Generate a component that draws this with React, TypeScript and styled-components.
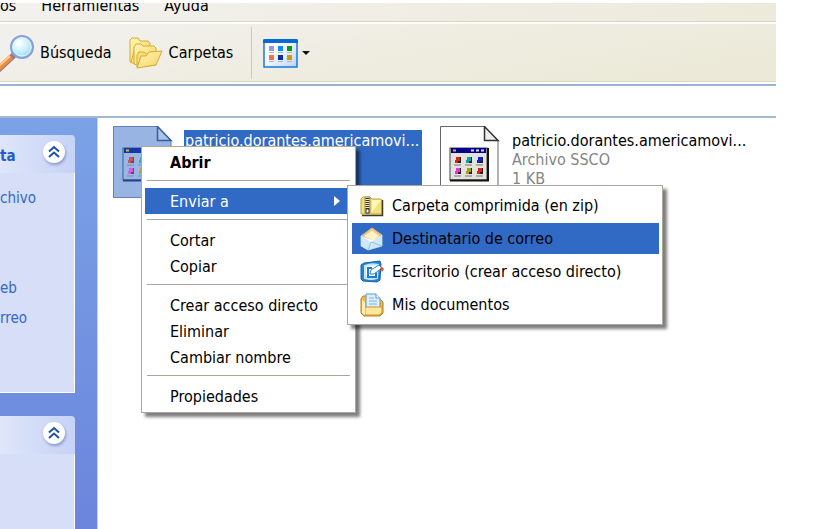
import React from "react";
import styled, { createGlobalStyle, css } from "styled-components";

const GlobalStyle = createGlobalStyle`
  * { box-sizing: border-box; }
  body {
    margin: 0;
    background: #fff;
    color: #000;
    font: 16px/19px "DejaVu Sans Condensed", Tahoma, "Noto Sans", sans-serif;
  }
  button { font: inherit; color: inherit; border: 0; background: none; padding: 0; text-align: left; }
  ul { list-style: none; margin: 0; padding: 0; }
`;

const Page = styled.div`
  display: flex;
  flex-direction: column;
  height: 100vh;
  overflow: hidden;
  padding: 3px 50px 0 0;
`;

const MenuBar = styled.nav`
  display: flex;
  gap: 25px;
  height: 19px;
  flex: none;
  overflow: hidden;
  background: linear-gradient(90deg, #f2f1ee, #edeadb);
  border-bottom: 1px solid #d9d5c5;
`;

const MenuBarItem = styled.button`
  height: 19px;
  margin-top: -7px;
`;

const Toolbar = styled.div`
  display: flex;
  align-items: center;
  flex: none;
  height: 60px;
  border-top: 2px solid #fcfcf8;
  border-bottom: 1px solid #d9d5c5;
  background: linear-gradient(170deg, #f1f0ec 10%, #eeecde 60%, #ebe8d6);
`;

const ToolButton = styled.button<{ $tight?: boolean }>`
  display: flex;
  align-items: center;
  gap: ${(p) => (p.$tight ? 4 : 6)}px;
  margin-right: 17px;
`;

const ToolSeparator = styled.div`
  width: 1px;
  height: 52px;
  margin: 0 11px 0 1px;
  background: #cfcab8;
`;

const AddressStrip = styled.div`
  flex: none;
  height: 34px;
  margin-top: 2px;
  border-top: 2px solid #9bb3cd;
  border-bottom: 2px solid #a3bace;
`;

const Body = styled.div`
  display: flex;
  flex: 1;
  min-height: 0;
`;

const Sidebar = styled.aside`
  display: flex;
  flex-direction: column;
  gap: 23px;
  width: 98px;
  flex: none;
  padding: 17px 22px 0 0;
  overflow: hidden;
  border-right: 1px solid #c3d0f3;
  background: linear-gradient(#7ba2e7, #6b85dc);
`;

const Panel = styled.section<{ $fill?: boolean }>`
  display: flex;
  flex-direction: column;
  flex: ${(p) => (p.$fill ? "1" : "none")};
`;

const PanelHeader = styled.header`
  display: flex;
  align-items: center;
  justify-content: space-between;
  height: 38px;
  padding-right: 10px;
  border-top-right-radius: 4px;
  background: linear-gradient(90deg, #dfe6fa, #c6d3f6);
`;

const PanelTitle = styled.h2`
  margin: 4px 0 0;
  font-size: 15px;
  font-weight: 700;
  color: #215dc6;
`;

const PanelBody = styled.div`
  display: flex;
  flex-direction: column;
  flex: 1;
  min-height: 220px;
  padding-top: 16px;
  background: #d6dff7;
  border: solid #fff;
  border-width: 0 1px 1px 0;
`;

const TaskLink = styled.a<{ $gap?: number }>`
  height: 19px;
  margin-bottom: ${(p) => p.$gap ?? 0}px;
  font-size: 15px;
  color: #3269cb;
  text-decoration: none;
`;

const Toggle = styled.button`
  display: grid;
  place-items: center;
  width: 22px;
  height: 22px;
  margin-bottom: 4px;
  border-radius: 50%;
  background: #fff;
  box-shadow: 1px 2px 3px #8d9bc9;
`;

const FilePane = styled.main`
  position: relative;
  display: flex;
  align-items: flex-start;
  flex: 1;
  padding: 8px 0 0 15px;
  gap: 18px;
`;

const FileTile = styled.div`
  display: flex;
  gap: 11px;
`;

const FileLabel = styled.div<{ $selected?: boolean }>`
  display: flex;
  flex-direction: column;
  width: 238px;
  height: 68px;
  margin-top: 4px;
  padding: 1px 0 0 1px;
  white-space: nowrap;
  ${(p) => p.$selected && css`background: #316ac5; color: #fff;`}
`;

const FileMeta = styled.span`
  color: #858585;
`;

const menuFrame = css`
  position: absolute;
  border: 1px solid #aca899;
  background: #fff;
  box-shadow: 4px 4px 3px rgba(0, 0, 0, 0.5);
`;

const ContextMenu = styled.ul`
  ${menuFrame}
  left: 43px;
  top: 28px;
  width: 215px;
  padding: 2px 3px 3px;
`;

const MenuRow = styled.li`
  position: relative;
`;

const MenuItem = styled.button<{ $active?: boolean; $bold?: boolean }>`
  display: flex;
  align-items: center;
  justify-content: space-between;
  width: 100%;
  height: 26px;
  padding: 0 12px 0 25px;
  white-space: nowrap;
  font-weight: ${(p) => (p.$bold ? 700 : 400)};
  ${(p) => p.$active && css`background: #316ac5; color: #fff;`}
`;

const MenuSeparator = styled.li`
  height: 1px;
  margin: 5px 2px 7px;
  background: #aca899;
`;

const SubMenu = styled.ul`
  ${menuFrame}
  left: 202px;
  top: -3px;
  z-index: 1;
  width: 316px;
  padding: 3px 3px 3px 4px;
`;

const SubMenuRow = styled.li`
  padding: 1px 0;
`;

const SubMenuItem = styled.button<{ $active?: boolean }>`
  display: flex;
  align-items: center;
  gap: 8px;
  width: 100%;
  height: 31px;
  padding-left: 8px;
  white-space: nowrap;
  ${(p) => p.$active && css`background: #316ac5;`}
`;

const Chevrons = () => (
  <svg width="12" height="14" viewBox="0 0 12 14" fill="none" stroke="#1c4fae" strokeWidth="2">
    <path d="M1 6.5 6 2l5 4.5M1 12l5-4.5 5 4.5" />
  </svg>
);

const SearchIcon = () => (
  <svg width="34" height="38" viewBox="0 0 34 38">
    <defs>
      <radialGradient id="lens" cx=".4" cy=".35" r=".75">
        <stop offset="0" stopColor="#fff" />
        <stop offset=".5" stopColor="#c5f0fd" />
        <stop offset="1" stopColor="#7fd0f6" />
      </radialGradient>
    </defs>
    <path d="M-2 36 14 21" stroke="#9c7a86" strokeWidth="6" />
    <path d="M-2 35 11 23" stroke="#f08c35" strokeWidth="5" />
    <path d="M-2 33 10 22" stroke="#ffc88d" strokeWidth="2" />
    <circle cx="22" cy="13" r="11" fill="url(#lens)" stroke="#8b9fd8" strokeWidth="2" />
    <circle cx="22" cy="13" r="9" fill="none" stroke="#e5f6ff" />
    <path d="M16 12q1-5 6-6" stroke="#fff" strokeWidth="2" fill="none" />
  </svg>
);

const FoldersIcon = () => (
  <svg width="34" height="32" viewBox="0 0 34 32" stroke="#d8aa35" strokeLinejoin="round">
    <defs>
      <linearGradient id="fold" x2="1" y2="1">
        <stop stopColor="#fff6b4" />
        <stop offset="1" stopColor="#f6d264" />
      </linearGradient>
    </defs>
    <path d="M1 25V3l2-2h6l2 3h8l2 2v19L6 27z" fill="url(#fold)" />
    <path d="M2 25 6 11l4-1" fill="none" />
    <path d="M5 27V10l2-3h5l2 2h11l2 2v14L8 28z" fill="url(#fold)" />
    <path d="M8 30V18l2-3h5l2 2h10v11z" fill="#f9dc78" />
    <path d="m8 31 4-12h5l3-4 13-1-6 14z" fill="url(#fold)" />
  </svg>
);

const swatches = [
  [7, 8, "#9a9ad0"], [16, 8, "#128cf0"], [25, 8, "#0b9a14"],
  [7, 17, "#ff7043"], [16, 17, "#0a3196"], [25, 17, "#d09a00"],
] as const;

const ViewsIcon = () => (
  <svg width="35" height="30" viewBox="0 0 35 30">
    <defs>
      <linearGradient id="view" x2="1" y2="1">
        <stop offset=".3" stopColor="#fff" />
        <stop offset="1" stopColor="#b9d6fa" />
      </linearGradient>
    </defs>
    <rect x="1" y="2" width="33" height="27" fill="url(#view)" stroke="#1b78dc" strokeWidth="1.500" />
    <path d="M0 5V2l2-1h31l2 1v3z" fill="#0569d6" />
    {swatches.map(([x, y, c]) => (
      <g key={`${x}-${y}`}>
        <rect x={x - 1} y={y} width="5" height="5" fill={c} />
        <path d={`M${x - 1} ${y + 6}.5h5`} stroke="#b4b8c0" />
      </g>
    ))}
  </svg>
);

const cells = [
  [15, 31, "#e02010"], [26, 31, "#10a0a8"], [37, 31, "#1020e0"],
  [15, 42, "#f030e0"], [26, 42, "#a8a010"], [37, 42, "#e02020"],
] as const;

const FileIcon = ({ selected = false }: { selected?: boolean }) => (
  <svg width="60" height="72" viewBox="0 0 60 72">
    <path d="M.5.500h44L58 14.500V71.500H.5z" fill={selected ? "#98b4e2" : "#fff"} stroke={selected ? "#5f81b8" : "#666"} />
    <path d="M44.500.500V14.500H58z" fill={selected ? "#a9c2ea" : "#eee"} stroke={selected ? "#375d9e" : "#333"} strokeWidth="1.500" />
    <rect x="10" y="22" width="37" height="32" fill={selected ? "#9bb6e3" : "#e4e2dc"} stroke={selected ? "#385c9f" : "#444"} />
    <path d="M10 54.500h38V22" fill="none" stroke={selected ? "#20458c" : "#111"} strokeWidth="2" />
    <rect x="11" y="22" width="35" height="5" fill={selected ? "#1736a8" : "#000090"} />
    <path d="M13 24.500h3" stroke="#d8c020" strokeWidth="2" />
    <path d="M31 24.500h3m2 0h3m2 0h3" stroke="#ddd" strokeWidth="2" />
    {cells.map(([x, y, c]) => (
      <g key={`${x}-${y}`} opacity={selected ? 0.65 : 1}>
        <path d={`M${x + 1} ${y}h5v6h-5z`} fill="#222" />
        <path d={`M${x + 1} ${y}h4v4h-4zM${x} ${y + 3}h3v3h-3z`} fill={c} />
        <path d={`M${x - 1} ${y + 8}h7`} stroke="#777" />
      </g>
    ))}
  </svg>
);

const ZipIcon = () => (
  <svg width="24" height="22" viewBox="0 0 24 22">
    <path d="M1 19V4l2-2h7l2 2h9l1 1v14z" fill="#f3e07a" stroke="#b9a53c" />
    <path d="M2 20.500h20.500V5" fill="none" stroke="#3f3a1e" strokeWidth="1.500" />
    <path d="M12 5h9L12 17z" fill="#fff6b8" />
    <path d="M5 2h5v16H5z" fill="#f4edb8" stroke="#a39650" />
    <path d="M7.500 3v12" stroke="#333" strokeWidth="4" strokeDasharray="1 1" />
    <path d="M6 14h3v4H6z" fill="#fff" stroke="#333" />
  </svg>
);

const MailIcon = () => (
  <svg width="24" height="24" viewBox="0 0 24 24">
    <path d="M1 9 12 1l10 7v11L8 23 1 19z" fill="#e4f3ff" stroke="#9fc5e8" />
    <path d="M2 9 12 1l9 7-9 6z" fill="#f8cf88" stroke="#e0a85a" />
    <path d="m4 9 8-5 7 5-7 4z" fill="#fff3ca" />
    <path d="M1 9v10l7 4 14-4V8L11 15z" fill="#cfe8fb" />
    <path d="m1 9 10 6L22 8 12 13z" fill="#fff" />
    <path d="m8 23 3-8 11 4" fill="none" stroke="#8fc0ea" />
  </svg>
);

const ShortcutIcon = () => (
  <svg width="24" height="24" viewBox="0 0 24 24">
    <path d="M1 5 4 3l16-2 1 3-1 16-3 2-14-1-2-2z" fill="#2383d8" stroke="#1763ad" />
    <path d="M5 6q7-3 13-1l-1 13q-6 2-12 0z" fill="#f2fbff" stroke="#c4e6fb" strokeWidth="2" />
    <path d="M12 8H8v9h8v-5" fill="none" stroke="#2678c9" strokeWidth="2" />
    <path d="m10 14 1-4 8-5 3 3-8 6z" fill="#fff" stroke="#3387cf" />
    <path d="m20 8 2-1 2 2-2 3z" fill="#e14b26" />
  </svg>
);

const DocumentsIcon = () => (
  <svg width="24" height="24" viewBox="0 0 24 24">
    <path d="M1 20V6l2-3h5l2 3h10l3 3v11l-3 3H4z" fill="#f3bd42" stroke="#b97b16" />
    <path d="M6 1h10l4 4v13H6z" fill="#dceefc" stroke="#5b9ad5" />
    <path d="M16 1v4h4" fill="#fff" stroke="#5b9ad5" />
    <path d="M9 5h5M9 8h8M9 11h8" stroke="#7eb5e6" />
    <path d="M5 14h17v6l-3 2H5z" fill="#ffe7a0" stroke="#cf9429" />
    <path d="M2 7v13l3 2V9z" fill="#fff0b0" />
  </svg>
);

const Arrow = () => (
  <svg width="6" height="10" viewBox="0 0 6 10"><path d="M0 0 6 5 0 10z" fill="#fff" /></svg>
);

const Caret = () => (
  <svg width="8" height="4" viewBox="0 0 8 4"><path d="M0 0h8L4 4z" fill="#111" /></svg>
);

const fileName = "patricio.dorantes.americamovi...";

const File = ({ selected = false, details = [] }: { selected?: boolean; details?: string[] }) => (
  <FileTile>
    <FileIcon selected={selected} />
    <FileLabel $selected={selected}>
      <span>{fileName}</span>
      {details.map((text) => <FileMeta key={text}>{text}</FileMeta>)}
    </FileLabel>
  </FileTile>
);

const sendTargets = [
  { label: "Carpeta comprimida (en zip)", Icon: ZipIcon },
  { label: "Destinatario de correo", Icon: MailIcon, active: true },
  { label: "Escritorio (crear acceso directo)", Icon: ShortcutIcon },
  { label: "Mis documentos", Icon: DocumentsIcon },
];

const Command = ({ label, bold }: { label: string; bold?: boolean }) => (
  <MenuRow role="none">
    <MenuItem role="menuitem" $bold={bold}>{label}</MenuItem>
  </MenuRow>
);

export default function App() {
  return (
    <>
      <GlobalStyle />
      <Page>
        <MenuBar>
          <MenuBarItem>os</MenuBarItem>
          <MenuBarItem>Herramientas</MenuBarItem>
          <MenuBarItem>Ayuda</MenuBarItem>
        </MenuBar>
        <Toolbar>
          <ToolButton><SearchIcon />Búsqueda</ToolButton>
          <ToolButton><FoldersIcon />Carpetas</ToolButton>
          <ToolSeparator />
          <ToolButton aria-label="Vistas" $tight><ViewsIcon /><Caret /></ToolButton>
        </Toolbar>
        <AddressStrip />
        <Body>
          <Sidebar>
            <Panel>
              <PanelHeader>
                <PanelTitle>ta</PanelTitle>
                <Toggle aria-label="Contraer"><Chevrons /></Toggle>
              </PanelHeader>
              <PanelBody>
                <TaskLink href="#archivo" $gap={71}>chivo</TaskLink>
                <TaskLink href="#web" $gap={11}>eb</TaskLink>
                <TaskLink href="#correo">rreo</TaskLink>
              </PanelBody>
            </Panel>
            <Panel $fill>
              <PanelHeader>
                <span />
                <Toggle aria-label="Contraer"><Chevrons /></Toggle>
              </PanelHeader>
              <PanelBody />
            </Panel>
          </Sidebar>
          <FilePane>
            <File selected />
            <File details={["Archivo SSCO", "1 KB"]} />
            <ContextMenu role="menu">
              <Command label="Abrir" bold />
              <MenuSeparator role="separator" />
              <MenuRow role="none">
                <MenuItem role="menuitem" aria-haspopup="menu" $active>Enviar a<Arrow /></MenuItem>
                <SubMenu role="menu">
                  {sendTargets.map(({ label, Icon, active }) => (
                    <SubMenuRow key={label} role="none">
                      <SubMenuItem role="menuitem" $active={active}><Icon />{label}</SubMenuItem>
                    </SubMenuRow>
                  ))}
                </SubMenu>
              </MenuRow>
              <MenuSeparator role="separator" />
              <Command label="Cortar" />
              <Command label="Copiar" />
              <MenuSeparator role="separator" />
              <Command label="Crear acceso directo" />
              <Command label="Eliminar" />
              <Command label="Cambiar nombre" />
              <MenuSeparator role="separator" />
              <Command label="Propiedades" />
            </ContextMenu>
          </FilePane>
        </Body>
      </Page>
    </>
  );
}
